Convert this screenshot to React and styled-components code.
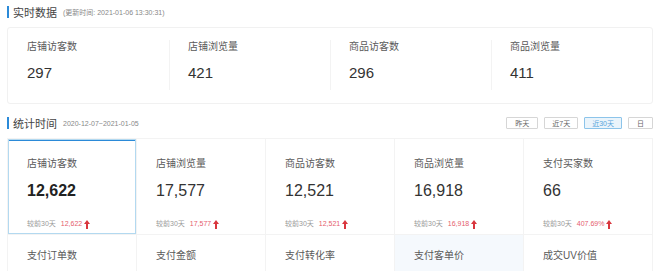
import styled, { createGlobalStyle } from 'styled-components';

const GlobalStyle = createGlobalStyle`
  body {
    margin: 0;
    background: #fff;
    font-family: "Liberation Sans", "Noto Sans CJK SC", sans-serif;
    color: #333;
    overflow: hidden;
  }
`;

const Page = styled.div`
  width: 660px;
  padding: 0 7px;
  box-sizing: border-box;
`;

const SectionHeader = styled.div`
  display: flex;
  align-items: center;
  height: 24px;
  margin-top: ${(p) => p.$top || 0}px;
  margin-bottom: 3px;
`;

const Bar = styled.span`
  width: 2px;
  height: 12px;
  background: #2b8ad8;
  margin-right: 4px;
`;

const Title = styled.span`
  font-size: 11px;
  color: #444;
`;

const Sub = styled.span`
  font-size: 7px;
  color: #888;
  margin-left: 6px;
`;

const RangeGroup = styled.div`
  display: flex;
  gap: 6px;
  margin-left: auto;
`;

const RangeBtn = styled.span`
  height: 12px;
  line-height: 11px;
  padding: 0 ${(p) => p.$pad || 7}px;
  font-size: 7px;
  box-sizing: border-box;
  border: 1px solid ${(p) => (p.$active ? '#8cc4ea' : '#d6d6d6')};
  background: ${(p) => (p.$active ? '#eaf4fb' : '#fff')};
  color: ${(p) => (p.$active ? '#5aa6dc' : '#666')};
  border-radius: 1px;
`;

const RealCard = styled.div`
  display: grid;
  grid-template-columns: repeat(4, 1fr);
  height: 77px;
  box-sizing: border-box;
  border: 1px solid #f1f1f1;
  border-radius: 3px;
  padding: 12px 0 14px;
`;

const RealCell = styled.div`
  height: 50px;
  padding-left: ${(p) => (p.$first ? 19 : 18)}px;
  border-left: ${(p) => (p.$first ? 'none' : '1px solid #f3f3f3')};
`;

const Label = styled.div`
  font-size: 10px;
  line-height: 12px;
  color: #5a5a5a;
  margin-top: 1px;
`;

const RealNum = styled.div`
  font-size: 15px;
  line-height: 18px;
  color: #333;
  margin-top: 11px;
`;

const StatGrid = styled.div`
  display: grid;
  grid-template-columns: repeat(5, 1fr);
  border-top: 1px solid #f3f3f3;
  border-left: 1px solid #f3f3f3;
`;

const StatCell = styled.div`
  height: ${(p) => (p.$row2 ? 60 : 96)}px;
  box-sizing: border-box;
  padding: ${(p) => (p.$row2 ? 14 : 18)}px 0 0 19px;
  border-right: 1px solid #f3f3f3;
  border-bottom: 1px solid #f3f3f3;
  background: ${(p) => (p.$hover ? '#f5f9fd' : '#fff')};
  box-shadow: ${(p) =>
    p.$active ? 'inset 0 0 0 1px #b3d9f0, inset 0 2px 0 #2b8ad8' : 'none'};
`;

const StatNum = styled.div`
  font-size: 16px;
  line-height: 20px;
  margin-top: 11px;
  font-weight: ${(p) => (p.$bold ? 700 : 400)};
  color: ${(p) => (p.$bold ? '#222' : '#333')};
`;

const Compare = styled.div`
  display: flex;
  align-items: center;
  font-size: 7px;
  line-height: 10px;
  margin-top: 18px;
  color: #9a9a9a;
`;

const Up = styled.span`
  color: #e5606e;
  margin-left: 5px;
  display: flex;
  align-items: center;
  gap: 2px;
`;

const Arrow = () => (
  <svg width="6" height="9" viewBox="0 0 6 9">
    <path d="M3 0 L6 4 L4 4 L4 9 L2 9 L2 4 L0 4 Z" fill="#d9363e" />
  </svg>
);

const realtime = [
  ['店铺访客数', '297'],
  ['店铺浏览量', '421'],
  ['商品访客数', '296'],
  ['商品浏览量', '411'],
];

const stats = [
  ['店铺访客数', '12,622', '12,622'],
  ['店铺浏览量', '17,577', '17,577'],
  ['商品访客数', '12,521', '12,521'],
  ['商品浏览量', '16,918', '16,918'],
  ['支付买家数', '66', '407.69%'],
];

const row2 = ['支付订单数', '支付金额', '支付转化率', '支付客单价', '成交UV价值'];

export default function App() {
  return (
    <Page>
      <GlobalStyle />
      <SectionHeader>
        <Bar />
        <Title>实时数据</Title>
        <Sub>(更新时间: 2021-01-06 13:30:31)</Sub>
      </SectionHeader>
      <RealCard>
        {realtime.map(([label, num], i) => (
          <RealCell key={label} $first={i === 0}>
            <Label>{label}</Label>
            <RealNum>{num}</RealNum>
          </RealCell>
        ))}
      </RealCard>

      <SectionHeader $top={7}>
        <Bar />
        <Title>统计时间</Title>
        <Sub>2020-12-07~2021-01-05</Sub>
        <RangeGroup>
          <RangeBtn $pad={8}>昨天</RangeBtn>
          <RangeBtn>近7天</RangeBtn>
          <RangeBtn $active>近30天</RangeBtn>
          <RangeBtn $pad={8}>日</RangeBtn>
        </RangeGroup>
      </SectionHeader>
      <StatGrid>
        {stats.map(([label, num, diff], i) => (
          <StatCell key={label} $active={i === 0}>
            <Label>{label}</Label>
            <StatNum $bold={i === 0}>{num}</StatNum>
            <Compare>
              较前30天
              <Up>
                {diff}
                <Arrow />
              </Up>
            </Compare>
          </StatCell>
        ))}
        {row2.map((label, i) => (
          <StatCell key={label} $row2 $hover={i === 3}>
            <Label>{label}</Label>
          </StatCell>
        ))}
      </StatGrid>
    </Page>
  );
}
